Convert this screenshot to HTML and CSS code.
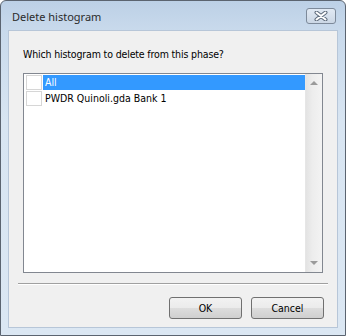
FILE: index.html
```html
<!DOCTYPE html>
<html>
<head>
    <title>Delete histogram</title>
    <link rel="stylesheet" href="styles.css">
</head>
<body>
  <div class="window">
    <div class="titlebar">
      <span class="title">Delete histogram</span>
      <div class="close">
        <svg width="14" height="10" viewBox="0 0 14 10">
          <path d="M2.5 1.5 L11.5 8.5 M11.5 1.5 L2.5 8.5" stroke="#5f6c7c" stroke-width="4" stroke-linecap="round"/>
          <path d="M2.5 1.5 L11.5 8.5 M11.5 1.5 L2.5 8.5" stroke="#ffffff" stroke-width="2" stroke-linecap="round"/>
        </svg>
      </div>
    </div>
    <div class="client">
      <p class="prompt">Which histogram to delete from this phase?</p>
      <div class="listbox">
        <div class="items">
          <div class="item selected">
            <span class="check"></span>
            <span class="label">All</span>
          </div>
          <div class="item">
            <span class="check"></span>
            <span class="label">PWDR Quinoli.gda Bank 1</span>
          </div>
        </div>
        <div class="scrollbar">
          <span class="arrow up"></span>
          <span class="arrow down"></span>
        </div>
      </div>
      <div class="separator"></div>
      <div class="buttons">
        <button class="btn">OK</button>
        <button class="btn">Cancel</button>
      </div>
    </div>
  </div>
</body>
</html>
```

FILE: styles.css
```css
/* Reset */
body, p, button {
    margin: 0;
    padding: 0;
    box-sizing: border-box;
}

body {
    width: 346px;
    height: 336px;
    overflow: hidden;
    background: #ffffff;
}

/* Window frame */
.window {
    width: 346px;
    height: 336px;
    box-sizing: border-box;
    border: 1px solid #5b6470;
    border-radius: 6px 6px 0 0;
    background: linear-gradient(to bottom, #bcd0e6 0px, #c9daec 30px, #d8e5f2 120px, #dbe7f3 100%);
    display: flex;
    flex-direction: column;
}

.titlebar {
    height: 29px;
    display: flex;
    align-items: center;
    justify-content: space-between;
    padding: 0 9px 0 11px;
}

.title {
    font-family: "Noto Sans", sans-serif;
    font-size: 11px;
    color: #2b2b2b;
    margin-top: 1px;
}

.close {
    width: 30px;
    height: 16px;
    box-sizing: border-box;
    border: 1px solid #7d8a9a;
    border-radius: 3px;
    background: linear-gradient(to bottom, #e1e9f3, #cbd7e5);
    display: flex;
    align-items: center;
    justify-content: center;
    margin-top: 1px;
}

/* Client area */
.client {
    flex: 1;
    margin: 0 7px 7px 7px;
    background: #f0f0f0;
    border: 1px solid #b7c6d8;
    box-sizing: border-box;
    padding: 0 0 0 14px;
    font-family: "DejaVu Sans Condensed", "DejaVu Sans", sans-serif;
    font-stretch: condensed;
    font-size: 10.5px;
    color: #000000;
}

.prompt {
    margin-top: 16px;
    height: 14px;
    line-height: 14px;
    letter-spacing: -0.15px;
}

/* List box */
.listbox {
    margin-top: 12px;
    width: 300px;
    height: 200px;
    box-sizing: border-box;
    border: 1px solid #828790;
    background: #ffffff;
    display: flex;
}

.items {
    flex: 1;
    padding: 0 0 0 2px;
}

.item {
    display: flex;
    align-items: center;
    height: 16px;
}

.check {
    width: 16px;
    height: 15px;
    box-sizing: border-box;
    border: 1px solid #d6d6d6;
    background: #ffffff;
    margin-right: 1px;
}

.item .label {
    flex: 1;
    height: 15px;
    line-height: 15px;
    padding-left: 2px;
}

.item.selected .label {
    background: #3399ff;
    color: #ffffff;
}

.scrollbar {
    width: 17px;
    background: linear-gradient(to right, #e3e3e3, #ededed 40%, #f3f3f3);
    border-left: 1px solid #e6e6e6;
    display: flex;
    flex-direction: column;
    justify-content: space-between;
    align-items: center;
    padding: 7px 0 7px 0;
    box-sizing: border-box;
}

.arrow {
    width: 0;
    height: 0;
    border-left: 4px solid transparent;
    border-right: 4px solid transparent;
}

.arrow.up {
    border-bottom: 4px solid #9a9a9a;
}

.arrow.down {
    border-top: 4px solid #9a9a9a;
}

/* Separator and buttons */
.separator {
    margin: 10px 0 0 -5px;
    width: 310px;
    height: 1px;
    background: #a0a0a0;
    border-bottom: 1px solid #ffffff;
}

.buttons {
    display: flex;
    justify-content: flex-end;
    gap: 9px;
    margin-top: 12px;
    padding-right: 13px;
}

.btn {
    width: 73px;
    height: 22px;
    border: 1px solid #707070;
    border-radius: 3px;
    background: linear-gradient(to bottom, #f2f2f2 0%, #ebebeb 50%, #dddddd 51%, #cfcfcf 100%);
    font-family: "DejaVu Sans Condensed", "DejaVu Sans", sans-serif;
    font-stretch: condensed;
    font-size: 10.5px;
    color: #000000;
}
```
